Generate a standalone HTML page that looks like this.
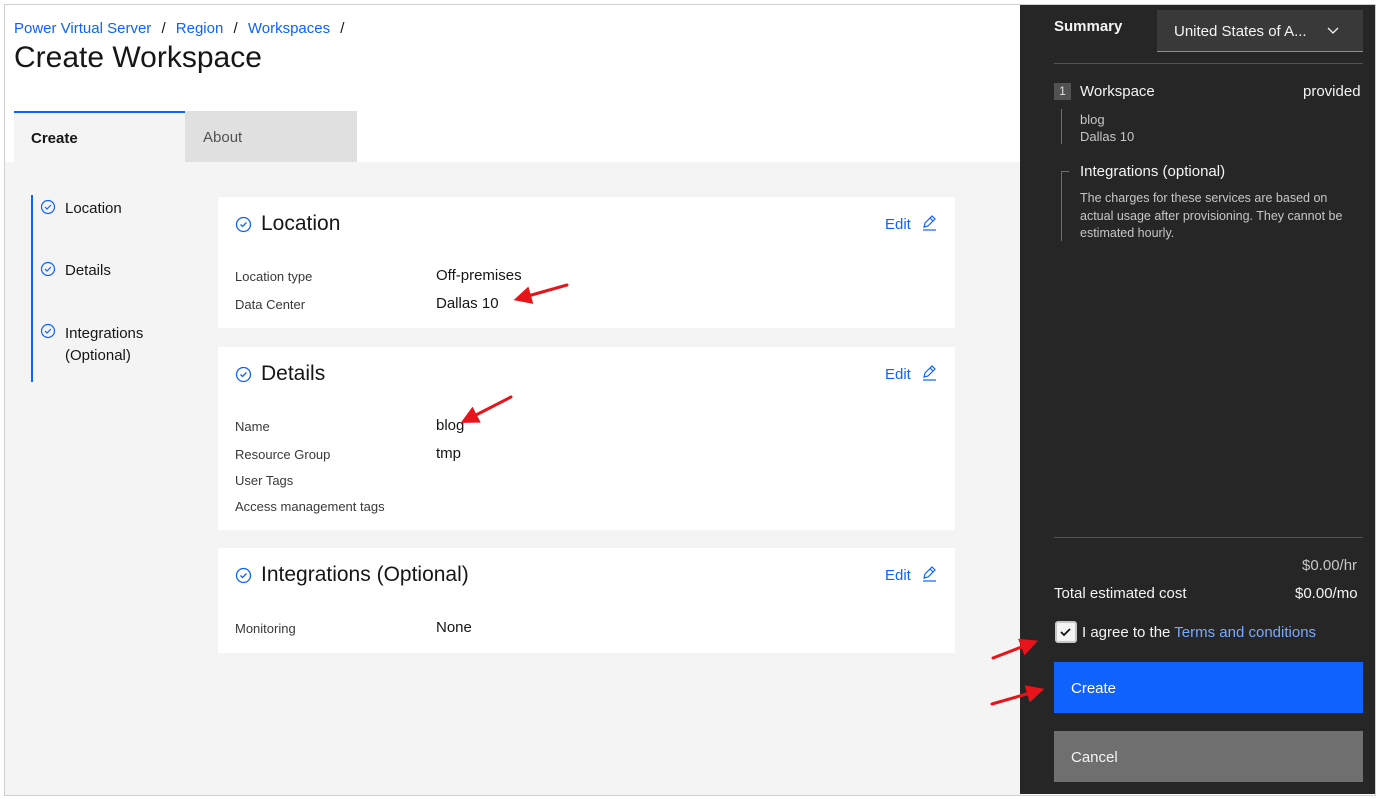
<!DOCTYPE html>
<html><head><meta charset="utf-8"><style>
*{box-sizing:border-box;margin:0;padding:0}
body{width:1379px;height:799px;background:#fff;font-family:"Liberation Sans",sans-serif;position:relative;overflow:hidden;color:#161616}
.a{position:absolute}
.lbl{font-size:13px;color:#393939}
.val{font-size:15px;color:#161616}
.card{position:absolute;left:218px;width:737px;background:#fff}
.ct{position:absolute;left:43px;top:15px;font-size:21px}
.ci{position:absolute;left:17px;top:19px}
.edit{position:absolute;left:667px;top:18px;font-size:15px;color:#0f62fe}
</style></head><body>
<div class="a" style="left:4px;top:4px;width:1372px;height:792px;border:1px solid #d0d0d0"></div>
<div class="a" style="left:5px;top:162px;width:1015px;height:633px;background:#f4f4f4"></div>
<div class="a" style="left:14px;top:20px;font-size:15px;color:#0f62fe">Power Virtual Server <span style="color:#161616;margin:0 6px">/</span> Region <span style="color:#161616;margin:0 6px">/</span> Workspaces <span style="color:#161616;margin:0 6px">/</span></div>
<div class="a" style="left:14px;top:41px;font-size:30px">Create Workspace</div>
<div class="a" style="left:14px;top:111px;width:171px;height:51px;background:#f4f4f4;border-top:2px solid #0f62fe;font-size:15px;font-weight:bold;padding:17px 0 0 17px">Create</div>
<div class="a" style="left:185px;top:111px;width:172px;height:51px;background:#e0e0e0;font-size:15px;color:#525252;padding:18px 0 0 18px">About</div>
<div class="a" style="left:31px;top:195px;width:2px;height:187px;background:#0f62fe"></div>
<svg class="a" style="left:40px;top:199px" width="16" height="16"><circle cx="8" cy="8" r="6.5" fill="none" stroke="#0f62fe" stroke-width="1.2"/><path d="M5 8l2 2 4-4" fill="none" stroke="#0f62fe" stroke-width="1.2"/></svg>
<div class="a" style="left:65px;top:200px;font-size:15px">Location</div>
<svg class="a" style="left:40px;top:261px" width="16" height="16"><circle cx="8" cy="8" r="6.5" fill="none" stroke="#0f62fe" stroke-width="1.2"/><path d="M5 8l2 2 4-4" fill="none" stroke="#0f62fe" stroke-width="1.2"/></svg>
<div class="a" style="left:65px;top:262px;font-size:15px">Details</div>
<svg class="a" style="left:40px;top:323px" width="16" height="16"><circle cx="8" cy="8" r="6.5" fill="none" stroke="#0f62fe" stroke-width="1.2"/><path d="M5 8l2 2 4-4" fill="none" stroke="#0f62fe" stroke-width="1.2"/></svg>
<div class="a" style="left:65px;top:323px;font-size:15px;line-height:22px">Integrations<br>(Optional)</div>

<div class="card" style="top:197px;height:131px">
<svg class="ci" width="17" height="17"><circle cx="8.5" cy="8.5" r="7" fill="none" stroke="#0f62fe" stroke-width="1.3"/><path d="M5.5 8.5l2 2 4-4" fill="none" stroke="#0f62fe" stroke-width="1.3"/></svg>
<div class="ct">Location</div>
<div class="edit">Edit <svg style="vertical-align:-2px;margin-left:6px" width="16" height="16"><path d="M3 12l1-4 7-7 3 3-7 7z M9 3l3 3" fill="none" stroke="#0f62fe" stroke-width="1.2"/><path d="M2 15h13" stroke="#0f62fe" stroke-width="1.2"/></svg></div>
<div class="a lbl" style="left:17px;top:72px">Location type</div><div class="a val" style="left:218px;top:70px">Off-premises</div>
<div class="a lbl" style="left:17px;top:100px">Data Center</div><div class="a val" style="left:218px;top:98px">Dallas 10</div>
</div>
<div class="card" style="top:347px;height:183px">
<svg class="ci" width="17" height="17"><circle cx="8.5" cy="8.5" r="7" fill="none" stroke="#0f62fe" stroke-width="1.3"/><path d="M5.5 8.5l2 2 4-4" fill="none" stroke="#0f62fe" stroke-width="1.3"/></svg>
<div class="ct">Details</div>
<div class="edit">Edit <svg style="vertical-align:-2px;margin-left:6px" width="16" height="16"><path d="M3 12l1-4 7-7 3 3-7 7z M9 3l3 3" fill="none" stroke="#0f62fe" stroke-width="1.2"/><path d="M2 15h13" stroke="#0f62fe" stroke-width="1.2"/></svg></div>
<div class="a lbl" style="left:17px;top:72px">Name</div><div class="a val" style="left:218px;top:70px">blog</div>
<div class="a lbl" style="left:17px;top:100px">Resource Group</div><div class="a val" style="left:218px;top:98px">tmp</div>
<div class="a lbl" style="left:17px;top:126px">User Tags</div>
<div class="a lbl" style="left:17px;top:152px">Access management tags</div>
</div>
<div class="card" style="top:548px;height:105px">
<svg class="ci" width="17" height="17"><circle cx="8.5" cy="8.5" r="7" fill="none" stroke="#0f62fe" stroke-width="1.3"/><path d="M5.5 8.5l2 2 4-4" fill="none" stroke="#0f62fe" stroke-width="1.3"/></svg>
<div class="ct">Integrations (Optional)</div>
<div class="edit">Edit <svg style="vertical-align:-2px;margin-left:6px" width="16" height="16"><path d="M3 12l1-4 7-7 3 3-7 7z M9 3l3 3" fill="none" stroke="#0f62fe" stroke-width="1.2"/><path d="M2 15h13" stroke="#0f62fe" stroke-width="1.2"/></svg></div>
<div class="a lbl" style="left:17px;top:73px">Monitoring</div><div class="a val" style="left:218px;top:71px">None</div>
</div>

<div class="a" style="left:1020px;top:5px;width:355px;height:789px;background:#262626"></div>
<div class="a" style="left:1054px;top:18px;font-size:15px;font-weight:bold;color:#f4f4f4">Summary</div>
<div class="a" style="left:1157px;top:10px;width:206px;height:42px;background:#393939;border-bottom:1px solid #8d8d8d;color:#f4f4f4;font-size:15px;padding:13px 0 0 17px">United States of A...<svg style="position:absolute;left:170px;top:17px" width="12" height="8"><path d="M1 1l5 5 5-5" fill="none" stroke="#f4f4f4" stroke-width="1.3"/></svg></div>
<div class="a" style="left:1054px;top:63px;width:309px;height:1px;background:#525252"></div>
<div class="a" style="left:1054px;top:83px;width:17px;height:17px;background:#525252;color:#e0e0e0;font-size:12px;text-align:center;line-height:17px">1</div>
<div class="a" style="left:1080px;top:83px;font-size:15px;color:#f4f4f4">Workspace</div>
<div class="a" style="left:1303px;top:83px;font-size:15px;color:#f4f4f4">provided</div>
<div class="a" style="left:1061px;top:109px;width:1px;height:35px;background:#6f6f6f"></div>
<div class="a" style="left:1080px;top:111px;font-size:13px;color:#c6c6c6;line-height:17px">blog<br>Dallas 10</div>
<div class="a" style="left:1061px;top:171px;width:1px;height:70px;background:#6f6f6f"></div>
<div class="a" style="left:1061px;top:171px;width:8px;height:1px;background:#6f6f6f"></div>
<div class="a" style="left:1080px;top:163px;font-size:15px;color:#f4f4f4">Integrations (optional)</div>
<div class="a" style="left:1080px;top:190px;font-size:12.5px;color:#c6c6c6;line-height:17.5px;width:272px">The charges for these services are based on actual usage after provisioning. They cannot be estimated hourly.</div>
<div class="a" style="left:1054px;top:537px;width:309px;height:1px;background:#525252"></div>
<div class="a" style="left:1302px;top:557px;font-size:15px;color:#c6c6c6">$0.00/hr</div>
<div class="a" style="left:1054px;top:585px;font-size:15px;color:#f4f4f4">Total estimated cost</div>
<div class="a" style="left:1295px;top:585px;font-size:15px;color:#f4f4f4">$0.00/mo</div>
<div class="a" style="left:1055px;top:621px;width:22px;height:22px;border:2px solid #c6c6c6;border-radius:3px;background:#f4f4f4"><svg width="18" height="18"><path d="M4 9l3 3 6-6" fill="none" stroke="#161616" stroke-width="1.8"/></svg></div>
<div class="a" style="left:1082px;top:624px;font-size:15px;color:#f4f4f4">I agree to the <span style="color:#78a9ff">Terms and conditions</span></div>
<div class="a" style="left:1054px;top:662px;width:309px;height:51px;background:#0f62fe;color:#fff;font-size:15px;padding:18px 0 0 17px">Create</div>
<div class="a" style="left:1054px;top:731px;width:309px;height:51px;background:#6f6f6f;color:#f4f4f4;font-size:15px;padding:18px 0 0 17px">Cancel</div>

<svg class="a" style="left:0;top:0" width="1379" height="799">
<defs><marker id="h" markerWidth="6" markerHeight="6" refX="1" refY="3" orient="auto" markerUnits="strokeWidth"><path d="M0 0L6 3L0 6z" fill="#e8141b"/></marker></defs>
<g stroke="#e8141b" stroke-width="3" fill="none" stroke-linecap="round">
<line x1="567" y1="285" x2="528" y2="296" marker-end="url(#h)"/>
<line x1="511" y1="397" x2="474" y2="416" marker-end="url(#h)"/>
<line x1="993" y1="658" x2="1024" y2="646" marker-end="url(#h)"/>
<line x1="992" y1="704" x2="1030" y2="693" marker-end="url(#h)"/>
</g>
</svg>
</body></html>
